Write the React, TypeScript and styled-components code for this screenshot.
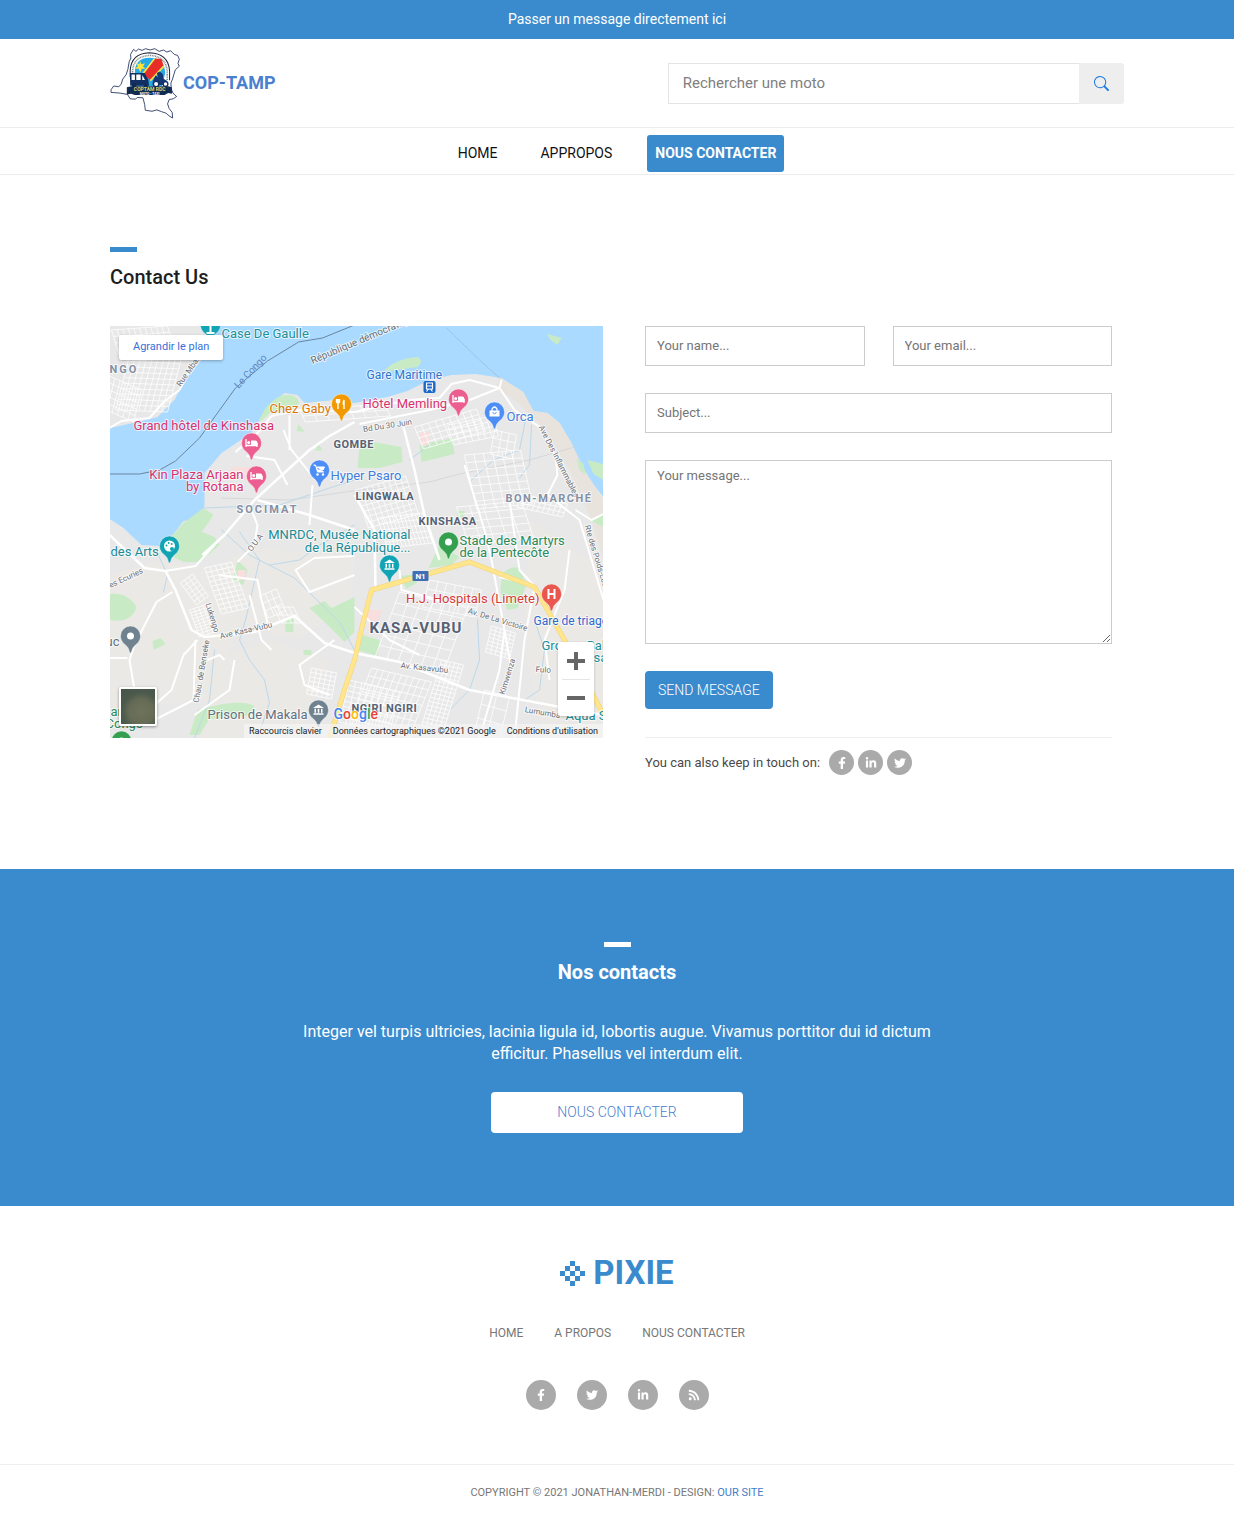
import React from 'react';
import styled, { createGlobalStyle } from 'styled-components';
import { BsSearch } from 'react-icons/bs';
import { FaFacebookF, FaLinkedinIn, FaTwitter, FaRss } from 'react-icons/fa';

const blue = '#3a8bcd';

const GlobalStyle = createGlobalStyle`
  *, *::before, *::after { box-sizing: border-box; }
  body {
    margin: 0;
    background: #fff;
    color: #1e1e1e;
    font-family: Roboto, "Liberation Sans", sans-serif;
    font-size: 14px;
    line-height: 20px;
  }
  a { color: inherit; text-decoration: none; }
  button, input, textarea { font-family: inherit; }
`;

const Container = styled.div`
  width: 100%;
  max-width: 1014px;
  margin: 0 auto;
`;

const HiddenLabel = styled.label`
  position: absolute;
  width: 1px;
  height: 1px;
  overflow: hidden;
  clip-path: inset(50%);
`;

const TopBar = styled.a`
  display: block;
  padding: 9px 0 10px;
  background: ${blue};
  color: #fff;
  text-align: center;
`;

const HeaderRow = styled(Container)`
  display: flex;
  align-items: center;
  justify-content: space-between;
  padding: 8px 0;
`;

const Brand = styled.a`
  display: flex;
  align-items: center;
  gap: 3px;
  color: #4a80cf;
  font-size: 18px;
  font-weight: 700;
`;

const SearchForm = styled.form`
  display: flex;
  width: 45%;
  height: 41px;
`;

const SearchInput = styled.input`
  flex: 1;
  min-width: 0;
  padding: 0 14px;
  border: 1px solid #e4e4e4;
  border-right: 0;
  font-size: 15px;
  color: #444;
  &::placeholder { color: #808080; opacity: 1; }
`;

const SearchButton = styled.button`
  display: grid;
  place-items: center;
  width: 45px;
  border: 0;
  border-radius: 0 3px 3px 0;
  background: #eee;
  color: #1a78e0;
`;

const Nav = styled.nav`
  display: flex;
  justify-content: center;
  align-items: flex-start;
  gap: 27px;
  height: 48px;
  padding: 7px 0;
  border-top: 1px solid #ececec;
  border-bottom: 1px solid #ececec;
`;

const NavLink = styled.a<{ $active?: boolean }>`
  padding: 8px 8px 9px;
  border-radius: 3px;
  background: ${p => (p.$active ? blue : 'transparent')};
  color: ${p => (p.$active ? '#fff' : '#111')};
  font-size: 14px;
  font-weight: ${p => (p.$active ? 700 : 400)};
`;

const ContactSection = styled.section`
  padding: 72px 0 94px;
`;

const Accent = styled.span<{ $light?: boolean }>`
  display: block;
  width: 27px;
  height: 5px;
  background: ${p => (p.$light ? '#fff' : blue)};
`;

const Title = styled.h1`
  margin: 12px 0 36px;
  font-size: 20px;
  line-height: 26px;
  font-weight: 500;
`;

const Columns = styled.div`
  display: grid;
  grid-template-columns: 1fr 1fr;
  align-items: start;
  gap: 28px;
`;

const FormColumn = styled.div`
  padding: 0 12px 0 14px;
`;

const ContactForm = styled.form`
  display: grid;
  grid-template-columns: 1fr 1fr;
  gap: 27px 28px;
  padding-bottom: 28px;
  border-bottom: 1px solid #eee;
`;

const Field = styled.div<{ $wide?: boolean }>`
  display: flex;
  grid-column: ${p => (p.$wide ? '1 / -1' : 'auto')};
`;

const TextInput = styled.input`
  width: 100%;
  height: 40px;
  padding: 0 11px 1px;
  border: 1px solid #ccc;
  font-size: 13px;
  &::placeholder { color: #757575; opacity: 1; }
`;

const MessageInput = styled.textarea`
  width: 100%;
  height: 184px;
  padding: 5px 11px;
  border: 1px solid #ccc;
  font-size: 13px;
  line-height: 20px;
  resize: both;
  &::placeholder { color: #757575; opacity: 1; }
`;

const SendButton = styled.button`
  justify-self: start;
  height: 38px;
  padding: 0 13px;
  border: 0;
  border-radius: 4px;
  background: ${blue};
  color: #fff;
  font-size: 14px;
  font-weight: 300;
`;

const Touch = styled.div`
  display: flex;
  align-items: center;
  gap: 9px;
  padding-top: 12px;
  color: #4a4a4a;
  font-size: 13px;
`;

const Socials = styled.div<{ $gap: number }>`
  display: flex;
  justify-content: center;
  gap: ${p => p.$gap}px;
`;

const SocialLink = styled.a<{ $size: number }>`
  display: grid;
  place-items: center;
  width: ${p => p.$size}px;
  height: ${p => p.$size}px;
  border-radius: 50%;
  background: #aaa;
  color: #fff;
  font-size: 12px;
`;

const CallToAction = styled.section`
  display: flex;
  flex-direction: column;
  align-items: center;
  padding: 73px 20px;
  background: ${blue};
  color: #fff;
  text-align: center;
`;

const CallTitle = styled.h2`
  margin: 12px 0 36px;
  font-size: 20px;
  line-height: 26px;
  font-weight: 700;
`;

const CallText = styled.p`
  max-width: 640px;
  margin: 0 0 27px;
  font-size: 16px;
  line-height: 22px;
`;

const CallButton = styled.a`
  width: 252px;
  padding: 10px 0 11px;
  border-radius: 4px;
  background: #fff;
  color: #4a80cf;
  font-size: 14px;
  font-weight: 300;
`;

const Footer = styled.footer`
  display: flex;
  flex-direction: column;
  align-items: center;
  padding-top: 47px;
`;

const PixieBrand = styled.a`
  display: flex;
  align-items: center;
  gap: 8px;
  color: ${blue};
  font-size: 33px;
  line-height: 40px;
  font-weight: 700;
`;

const FooterLinks = styled.nav`
  display: flex;
  gap: 31px;
  margin: 30px 0 37px;
  color: #777;
  font-size: 12px;
`;

const Copyright = styled.div`
  width: 100%;
  margin-top: 54px;
  padding: 18px 0 17px;
  border-top: 1px solid #eee;
  color: #777;
  font-size: 11px;
  text-align: center;
  a { color: #4380c8; }
`;

/* ---------- map ---------- */

const MapFrame = styled.div`
  position: relative;
  height: 412px;
  overflow: hidden;
  background: #e8e8e8;
`;

const MapCanvas = styled.svg`
  display: block;
  width: 100%;
  height: 100%;
`;

const MapLink = styled.a`
  position: absolute;
  top: 9px;
  left: 9px;
  padding: 2px 14px 3px;
  border-radius: 2px;
  background: #fff;
  box-shadow: 0 1px 3px rgba(0, 0, 0, 0.3);
  color: #3a6fd8;
  font-size: 11px;
`;

const Satellite = styled.button`
  position: absolute;
  left: 9px;
  bottom: 12px;
  width: 38px;
  height: 39px;
  border: 2px solid #fff;
  border-radius: 2px;
  background: radial-gradient(circle at 60% 65%, #6f735c 0%, #666b56 40%, #4c5a4c 62%, #44544a 100%);
  box-shadow: 0 1px 3px rgba(0, 0, 0, 0.4);
`;

const ZoomPanel = styled.div`
  position: absolute;
  right: 9px;
  bottom: 22px;
  padding: 0 4px;
  border-radius: 2px;
  background: #fff;
  box-shadow: 0 1px 3px rgba(0, 0, 0, 0.2);
`;

const ZoomButton = styled.button`
  display: grid;
  place-items: center;
  width: 28px;
  height: 37px;
  padding: 0;
  border: 0;
  background: #fff;
  & + & { border-top: 1px solid #e6e6e6; }
`;

const MapLegal = styled.div`
  position: absolute;
  right: 0;
  bottom: 0;
  display: flex;
  gap: 11px;
  padding: 0 5px;
  background: rgba(245, 245, 245, 0.7);
  color: #222;
  font-size: 9px;
  line-height: 14px;
`;

const Halo = styled.text`
  paint-order: stroke;
  stroke: #fff;
  stroke-width: 2px;
  stroke-linejoin: round;
  stroke-opacity: 0.7;
`;

type Pt = [number, number];

/* Streets filling the parallelogram spanned by two sides from one corner. */
function Streets({ at, u, v, m, n }: { at: Pt; u: Pt; v: Pt; m: number; n: number }) {
  let d = '';
  for (let i = 0; i <= m; i++) {
    const k = i / m;
    d += `M${at[0] + u[0] * k} ${at[1] + u[1] * k}l${v[0]} ${v[1]}`;
  }
  for (let j = 0; j <= n; j++) {
    const k = j / n;
    d += `M${at[0] + v[0] * k} ${at[1] + v[1] * k}l${u[0]} ${u[1]}`;
  }
  return <path d={d} fill="none" stroke="#fff" strokeWidth="1" strokeOpacity=".75" />;
}

function Pin({ x, y, fill, children }: { x: number; y: number; fill: string; children?: React.ReactNode }) {
  return (
    <g transform={`translate(${x} ${y})`}>
      <path d="M0 17C-1.500 17-1 13-3.500 10.500C-6 8-10 5.500-10 0A10 10 0 0 1 10 0C10 5.500 6 8 3.500 10.500C1 13 1.500 17 0 17Z" fill={fill} stroke="#fff" strokeWidth=".6" strokeOpacity=".7" />
      {children || <circle r="3.500" fill="#fff" />}
    </g>
  );
}

const bed = (
  <g>
    <path d="M-5.500-4V4M-5.500 2.500H5.500M5.500 4V0" fill="none" stroke="#fff" strokeWidth="1.300" />
    <circle cx="-2.800" cy="-.5" r="1.500" fill="#fff" />
    <path d="M-.5-2.500H4Q6-2.500 6 0V2.500H-.5Z" fill="#fff" />
  </g>
);
const museum = <path d="M-5.500-2L0-5.500L5.500-2ZM-4-1.200h1.500v4H-4ZM-.8-1.200H.8v4H-.8ZM2.500-1.200H4v4H2.500ZM-5 3.300H5V4.800H-5Z" fill="#fff" />;

type Label = { x: number; y: number; t: string; c: string; a?: 'start' | 'middle' | 'end'; s?: number; b?: boolean; ls?: number };

const labels: Label[] = [
  { x: 222, y: 338, t: 'Case De Gaulle', c: '#22909c' },
  { x: 367, y: 379, t: 'Gare Maritime', c: '#2f74c8', s: 12 },
  { x: 363, y: 408, t: 'Hôtel Memling', c: '#d8326e' },
  { x: 270, y: 413, t: 'Chez Gaby', c: '#d87808' },
  { x: 134, y: 430, t: 'Grand hôtel de Kinshasa', c: '#d8326e' },
  { x: 244, y: 479, t: 'Kin Plaza Arjaan', c: '#d8326e', a: 'end' },
  { x: 244, y: 491, t: 'by Rotana', c: '#d8326e', a: 'end' },
  { x: 507, y: 421, t: 'Orca', c: '#3f7de0' },
  { x: 331, y: 480, t: 'Hyper Psaro', c: '#3f7de0' },
  { x: 411, y: 539, t: 'MNRDC, Musée National', c: '#1a8b96', a: 'end' },
  { x: 411, y: 552, t: 'de la République...', c: '#1a8b96', a: 'end' },
  { x: 460, y: 545, t: 'Stade des Martyrs', c: '#2b8a58' },
  { x: 460, y: 557, t: 'de la Pentecôte', c: '#2b8a58' },
  { x: 540, y: 603, t: 'H.J. Hospitals (Limete)', c: '#d53c39', a: 'end' },
  { x: 534, y: 625, t: 'Gare de triage', c: '#2f68ce', s: 12 },
  { x: 542, y: 650, t: 'Groupe Bal', c: '#22909c' },
  { x: 594, y: 662, t: 'sa', c: '#22909c' },
  { x: 566, y: 720, t: 'Aqua S', c: '#1a8b96' },
  { x: 111, y: 556, t: 'des Arts', c: '#1a8b96' },
  { x: 106, y: 646, t: 'uc', c: '#607080' },
  { x: 208, y: 719, t: 'Prison de Makala', c: '#607080' },
  { x: 111, y: 716, t: 'ar', c: '#2b8a58' },
  { x: 106, y: 728, t: 'Congo', c: '#2b8a58' },
  { x: 110, y: 373, t: 'NGO', c: '#8590a4', s: 11, b: true, ls: 2 },
  { x: 334, y: 448, t: 'GOMBE', c: '#566173', s: 11, b: true, ls: 0.5 },
  { x: 356, y: 500, t: 'LINGWALA', c: '#566173', s: 11, b: true, ls: 0.5 },
  { x: 237, y: 513, t: 'SOCIMAT', c: '#8590a4', s: 11, b: true, ls: 2 },
  { x: 506, y: 502, t: 'BON-MARCHÉ', c: '#8590a4', s: 11, b: true, ls: 1.5 },
  { x: 419, y: 525, t: 'KINSHASA', c: '#566173', s: 11, b: true, ls: 0.5 },
  { x: 370, y: 633, t: 'KASA-VUBU', c: '#566173', s: 15, b: true, ls: 1 },
  { x: 352, y: 712, t: 'NGIRI NGIRI', c: '#566173', s: 11, b: true, ls: 0.5 },
];

const streetNames: { x: number; y: number; r: number; t: string; c?: string; s?: number }[] = [
  { x: 181, y: 387, r: -55, t: 'Rue Mbam' },
  { x: 239, y: 389, r: -47, t: 'Le Congo', c: '#5f86c0', s: 10 },
  { x: 313, y: 364, r: -23, t: 'République démocratique', s: 10 },
  { x: 364, y: 432, r: -9, t: 'Bd Du 30 Juin' },
  { x: 539, y: 427, r: 63, t: 'Ave Des Inflammables' },
  { x: 585, y: 526, r: 73, t: 'Rte des Poids-Lourds' },
  { x: 252, y: 552, r: -53, t: 'O.U.A' },
  { x: 111, y: 588, r: -25, t: 'es Ecuries' },
  { x: 206, y: 604, r: 73, t: 'Lukengo' },
  { x: 221, y: 639, r: -13, t: 'Ave Kasa-Vubu' },
  { x: 199, y: 703, r: -80, t: 'Chau. de Benseke' },
  { x: 468, y: 613, r: 17, t: 'Av. De La Victoire' },
  { x: 401, y: 668, r: 6, t: 'Av. Kasavubu' },
  { x: 505, y: 695, r: -73, t: 'Kimwenza' },
  { x: 536, y: 672, r: 3, t: 'Fulo' },
  { x: 525, y: 712, r: 10, t: 'Lumumba' },
];

function CityMap() {
  return (
    <MapCanvas viewBox="110 326 494 412" preserveAspectRatio="xMidYMid slice" role="img" aria-label="Carte de Kinshasa">
      <rect x="110" y="326" width="494" height="412" fill="#e8e8e8" />
      {/* hilly ground and suburbs */}
      <path d="M110 575L160 560L215 568L250 548L355 556L352 600L300 640L240 625L210 700L110 710ZM530 520L604 570V738H545L525 650ZM270 640L330 660L300 738H200L215 660Z" fill="#ebe8e5" opacity=".8" />
      {/* river */}
      <path d="M217 326H604V497L590 480L578 463L572 443L560 423L548 413L534 411L522 397L502 378L476 374L452 375L430 380L408 391L388 397L355 403L335 400L305 403L298 395L285 393L268 407L260 420L252 433L222 453L205 473L205 505L202 518L184 521L174 534L160 546L142 545L124 528L110 519V428L138 422L158 417L175 400L185 380L202 360L212 345Z" fill="#aadaff" />
      <path d="M502 378L524 392L534 411L548 413L560 423L572 443L585 470L604 500V560L592 520L570 470L545 428L515 400L495 388Z" fill="#e9e3dd" />
      <path d="M578 458Q588 460 591 478L600 487V472L587 456Z" fill="#aadaff" />
      {/* parks and islands */}
      <g fill="#c8ebc5">
        <path d="M385 370Q398 358 418 357Q425 361 418 367L390 371ZM548 334L562 338L558 345L550 339ZM577 458L584 464L586 475L580 470ZM588 460L604 464V480L594 474Z" />
        <path d="M266 408Q282 389 296 397Q306 406 288 409L272 411Q258 426 260 419ZM204 508L214 515L203 531L178 534L184 523ZM183 524L215 537L220 545L200 562L184 562L160 550Z" />
        <path d="M360 448L374 442L402 447L403 462L380 468L358 468ZM420 445L453 438L455 454L422 462ZM238 560L248 570L244 585L234 580ZM310 608L325 601L332 608L355 597V632L345 642L325 622ZM110 594Q128 592 137 607Q132 624 110 620ZM429 568L440 545L460 557L452 565ZM400 576L420 574L417 583L407 589ZM502 575Q510 565 520 568L527 585L518 608L508 610L501 592ZM360 634L380 640L378 656L358 650ZM198 710Q240 698 255 706L248 716L210 719L200 735H190ZM153 641L161 638L166 644L154 650ZM285 618H294V632H286ZM304 650H312V655H304ZM590 520L604 514V527ZM458 511H465V517H458ZM299 424L305 432L297 431ZM319 444L323 450L316 451Z" />
      </g>
      <path d="M420 433L430 432L430 444L422 447ZM238 570H246V580H238ZM368 610H382L380 621H366ZM232 467H250V480H228Z" fill="#f8dedd" />
      {/* rail lines and streams */}
      <g fill="none" strokeLinecap="round">
        <path d="M110 474H140L160 470L176 461L200 438L236 388L268 361L299 342L323 338L355 325" stroke="#6b85a0" strokeWidth="1" />
        <path d="M447 328L480 360L500 378" stroke="#9bbcd8" strokeWidth=".8" strokeDasharray="4 1" />
        <path d="M222 498L290 500L360 490L430 482L460 474L530 460L575 447" stroke="#cfd3d7" strokeWidth=".8" />
        <path d="M205 508L280 505L330 488L355 480M222 530L250 555L295 578L340 622L355 650M158 553L168 575L164 592M240 532L260 560L246 620L240 640L250 660L265 680L270 703L258 738M355 525L320 545L300 560L270 565M526 420L520 450L494 460L470 482M532 425L530 465L520 478M430 445L410 460M478 620L480 660L470 690L450 710M535 620L545 650L540 690L525 700M215 650L210 700L195 738" stroke="#bcd8ea" strokeWidth="1" />
      </g>
      {/* dense street grids */}
      <Streets at={[112, 330]} u={[56, -4]} v={[10, 32]} m={10} n={5} />
      <Streets at={[130, 356]} u={[52, 2]} v={[-14, 54]} m={9} n={10} />
      <Streets at={[110, 376]} u={[32, 14]} v={[-8, 32]} m={6} n={5} />
      <Streets at={[300, 410]} u={[85, -6]} v={[6, 12]} m={7} n={2} />
      <Streets at={[415, 427]} u={[62, -18]} v={[9, 22]} m={9} n={4} />
      <Streets at={[448, 425]} u={[45, -9]} v={[6, 20]} m={7} n={4} />
      <Streets at={[465, 455]} u={[56, -5]} v={[12, 54]} m={6} n={7} />
      <Streets at={[495, 430]} u={[22, 5]} v={[-4, 24]} m={3} n={3} />
      <Streets at={[356, 490]} u={[50, -14]} v={[13, 38]} m={9} n={7} />
      <Streets at={[378, 518]} u={[45, -5]} v={[10, 30]} m={12} n={5} />
      <Streets at={[457, 507]} u={[65, -6]} v={[12, 37]} m={5} n={5} />
      <Streets at={[522, 494]} u={[46, 10]} v={[-5, 13]} m={9} n={3} />
      <Streets at={[205, 568]} u={[27, -6]} v={[17, 46]} m={5} n={10} />
      <Streets at={[181, 583]} u={[12, -9]} v={[16, 22]} m={3} n={6} />
      <Streets at={[190, 610]} u={[18, -6]} v={[10, 27]} m={4} n={9} />
      <Streets at={[260, 596]} u={[17, -7]} v={[9, 22]} m={3} n={3} />
      <Streets at={[274, 607]} u={[20, 0]} v={[8, 16]} m={4} n={2} />
      <Streets at={[312, 668]} u={[25, 5]} v={[-5, 26]} m={5} n={6} />
      <Streets at={[400, 592]} u={[68, 16]} v={[-24, 64]} m={6} n={6} />
      <Streets at={[430, 580]} u={[52, 10]} v={[-7, 27]} m={6} n={3} />
      <Streets at={[372, 668]} u={[60, 14]} v={[-22, 55]} m={10} n={7} />
      <Streets at={[442, 660]} u={[22, 5]} v={[-20, 66]} m={5} n={16} />
      <Streets at={[350, 680]} u={[50, 12]} v={[-10, 42]} m={8} n={8} />
      <Streets at={[492, 626]} u={[24, 7]} v={[-6, 26]} m={5} n={7} />
      <Streets at={[485, 690]} u={[25, 7]} v={[-10, 42]} m={2} n={3} />
      {/* main roads */}
      <g fill="none" stroke="#fff" strokeWidth="2" strokeLinejoin="round">
        <path d="M110 428L122 421L150 418L164 402L180 390L193 365L220 337" />
        <path d="M236 452L259 432L272 416L300 410L355 412L410 400L440 398L452 384L470 380L500 388L502 380M360 424L430 410L470 400L500 388L515 410L540 427L556 456L558 475L548 495L580 520L604 600" />
        <path d="M203 555L225 535L255 500L310 450L330 436L355 422M404 427L415 470L425 515L440 560M355 495L375 530L376 590M258 500L310 515L355 530M110 535L145 568L166 571L176 590L192 630L205 637L255 632L295 616L325 643L355 653L400 662L470 690L604 715" strokeWidth="2.500" />
        <path d="M166 571L196 566L215 545L203 555M173 592L157 602L135 645L130 660L135 690M110 658H128M198 640L184 655L172 690L155 705M196 640L194 700L155 720L135 715M238 562L255 545L258 525L250 505M220 575L258 580L262 600L270 630M465 465L485 530L492 560L505 630L512 670M576 510L592 520L604 514M500 577L534 585L520 570L510 500M355 607L390 640L420 655M247 456L275 460L288 485M284 430L292 450L316 480M290 415L290 450M313 485L310 525M355 556L315 558L296 570L310 592L355 575M505 630L500 670L480 738M535 587L525 640L515 738M570 550L565 590L545 640L550 680M250 595L262 640L272 650M335 640L300 665L305 685L330 695M235 660L230 690L195 715M225 660L220 655L208 660M400 570L402 590L440 600" />
      </g>
      <path d="M330 738L345 690L355 660L363 625L372 590L470 562L535 587L565 640L604 715" fill="none" stroke="#f1d27c" strokeWidth="5" strokeLinejoin="round" />
      <path d="M330 738L345 690L355 660L363 625L372 590L470 562L535 587L565 640L604 715" fill="none" stroke="#ffe58b" strokeWidth="4" strokeLinejoin="round" />
      <rect x="413" y="571" width="16" height="10" rx="1" fill="#3f6fb5" />
      <text x="421" y="579" fill="#fff" fontSize="8" fontWeight="700" textAnchor="middle">N1</text>
      {streetNames.map(s => (
        <Halo key={s.t} transform={`translate(${s.x} ${s.y}) rotate(${s.r})`} fontSize={s.s || 8} fill={s.c || '#6b7076'} style={s.c ? { stroke: 'none' } : undefined}>{s.t}</Halo>
      ))}
      {labels.map(l => (
        <Halo key={l.t} x={l.x} y={l.y} fill={l.c} fontSize={l.s || 13} fontWeight={l.b ? 700 : 400} letterSpacing={l.ls} textAnchor={l.a}>{l.t}</Halo>
      ))}
      <Pin x={211} y={325} fill="#12a4b4"><path d="M0-3V8M-4 8H4" stroke="#fff" strokeWidth="2" /></Pin>
      <Pin x={342} y={404} fill="#f29900"><path d="M-3.500 5V-5M-5-5V-2Q-3.500 0-2-2V-5M2.500 5V-4Q1 0 2.500 1" fill="none" stroke="#fff" strokeWidth="1.400" /></Pin>
      <Pin x={459} y={399} fill="#eb5e8f">{bed}</Pin>
      <Pin x={252} y={443} fill="#eb5e8f">{bed}</Pin>
      <Pin x={257} y={476} fill="#eb5e8f">{bed}</Pin>
      <Pin x={495} y={412} fill="#4c8df6"><path d="M-5-1.500H5V4.500H-5Z" fill="#fff" /><path d="M-2.500-1V-3Q0-7 2.500-3V-1" fill="none" stroke="#fff" strokeWidth="1.300" /><path d="M-2 .5Q0 3 2 .5" fill="none" stroke="#4c8df6" /></Pin>
      <Pin x={320} y={470} fill="#4c8df6"><path d="M-6-5H-4L-2 2H4.500M-3-3H5L3.500 0H-2Z" fill="#fff" stroke="#fff" /><circle cx="-2" cy="4.500" r="1.200" fill="#fff" /><circle cx="3.500" cy="4.500" r="1.200" fill="#fff" /></Pin>
      <Pin x={390} y={565} fill="#12a4b4">{museum}</Pin>
      <Pin x={170} y={546} fill="#12a4b4"><circle r="5.500" fill="#fff" /><g fill="#12a4b4"><circle cx="-3" cy="-.5" r="1" /><circle cx="-.8" cy="-3" r="1" /><circle cx="2.200" cy="-2" r="1" /><circle cx="2.500" cy="3" r="2" /></g></Pin>
      <Pin x={449} y={542} fill="#34a04f" />
      <Pin x={552} y={594} fill="#e9574f"><path d="M-3-5V5M3-5V5M-3 0H3" stroke="#fff" strokeWidth="2" /></Pin>
      <Pin x={131} y={636} fill="#6f8290" />
      <Pin x={319} y={710} fill="#6f8290">{museum}</Pin>
      <Pin x={122} y={741} fill="#34a04f" />
      <rect x="424" y="381" width="12" height="12" rx="2" fill="#1967c8" />
      <path d="M427 383H433V389H427ZM427 391.500L429 389M433 391.500L431 389M427 386H433" fill="none" stroke="#fff" strokeWidth="1.200" />
      <Halo x="334" y="719" fontSize="14" fontWeight="500">
        <tspan fill="#4285f4">G</tspan><tspan fill="#ea4335">o</tspan><tspan fill="#fbbc05">o</tspan><tspan fill="#4285f4">g</tspan><tspan fill="#34a853">l</tspan><tspan fill="#ea4335">e</tspan>
      </Halo>
    </MapCanvas>
  );
}

function CongoLogo() {
  return (
    <svg width="70" height="72" viewBox="31 21 208 214" aria-hidden="true">
      <path d="M101 28L108 34L116 27L126 31L137 26L150 30L164 26L177 34L190 30L200 36L211 32L222 43L232 46L237 57L233 70L237 78L225 89L221 102L217 116L212 128L213 145L218 158L229 168L219 175L207 177L202 190L207 204L216 216L217 232L207 226L198 218L184 213L170 208L156 212L136 209L134 192L129 172L112 171L107 176L91 175L83 162L61 158L34 156L34 148L42 137L57 139L64 132L69 116L79 103L84 88L88 65L93 54L92 43Z" fill="#fff" stroke="#1c2d5c" strokeWidth="2.500" strokeLinejoin="round" />
      <path d="M91 110V92Q93 40 148 38Q205 40 208 92V120" fill="#fff" stroke="#1b2338" strokeWidth="3" />
      <path d="M98 110V94Q100 49 148 46Q198 48 201 94V120" fill="none" stroke="#8b8e90" strokeWidth="5" strokeDasharray="3 2" />
      <path d="M105 100Q103 54 148 53Q194 54 195 100L185 137H112Z" fill="#25aae8" />
      <path d="M129 103L165 55L184 57L190 76L151 119Z" fill="#e82c28" />
      <path d="M127 103L163 56M151 121L191 78" stroke="#f6df4a" strokeWidth="5" />
      <path d="M120 62L124 72L135 69L129 79L137 86L125 86L121 96L116 86L105 85L114 78L109 68L118 72Z" fill="#ffe338" />
      <path d="M90 98H134L145 119L147 136H91Z" fill="#123064" />
      <path d="M95 103H105V119H95ZM109 103H122V119H109ZM127 104L135 119H127Z" fill="#fff" />
      <path d="M158 123L166 106L174 111L170 98L179 94L188 101L190 115L201 122V134H158Z" fill="#143776" />
      <circle cx="103" cy="136" r="7" fill="#122b50" /><circle cx="137" cy="136" r="6" fill="#122b50" /><circle cx="168" cy="131" r="8" fill="#fff" stroke="#123064" strokeWidth="4" /><circle cx="196" cy="131" r="7" fill="#fff" stroke="#123064" strokeWidth="4" />
      <path d="M81 141L94 138H204L215 141V160L204 158L193 164H105L94 160L81 162Z" fill="#122b50" />
      <text x="149" y="152" fontSize="15" fontWeight="700" textAnchor="middle" fill="#d4d978">COPTAM RDC</text>
      <text x="149" y="163" fontSize="10" fontWeight="700" textAnchor="middle" fill="#fff">MOTO - TAXI</text>
    </svg>
  );
}

function PixieMark() {
  const cells: Pt[] = [[2, 0], [1, 1], [3, 1], [0, 2], [2, 2], [4, 2], [1, 3], [3, 3], [2, 4]];
  return (
    <svg width="25" height="25" viewBox="0 0 5 5" fill="currentColor" aria-hidden="true">
      {cells.map(([x, y]) => <rect key={`${x}${y}`} x={x} y={y} width="1" height="1" />)}
    </svg>
  );
}

export default function App() {
  return (
    <>
      <GlobalStyle />
      <TopBar href="#contact">Passer un message directement ici</TopBar>
      <header>
        <HeaderRow>
          <Brand href="#"><CongoLogo />COP-TAMP</Brand>
          <SearchForm role="search" onSubmit={e => e.preventDefault()}>
            <HiddenLabel htmlFor="search">Rechercher une moto</HiddenLabel>
            <SearchInput id="search" placeholder="Rechercher une moto" />
            <SearchButton aria-label="Rechercher"><BsSearch size={15} /></SearchButton>
          </SearchForm>
        </HeaderRow>
        <Nav>
          <NavLink href="#">HOME</NavLink>
          <NavLink href="#">APPROPOS</NavLink>
          <NavLink href="#contact" $active>NOUS CONTACTER</NavLink>
        </Nav>
      </header>

      <ContactSection id="contact">
        <Container>
          <Accent />
          <Title>Contact Us</Title>
          <Columns>
            <MapFrame>
              <CityMap />
              <MapLink href="#">Agrandir le plan</MapLink>
              <Satellite aria-label="Vue satellite" />
              <ZoomPanel>
                <ZoomButton aria-label="Zoom avant">
                  <svg width="18" height="18" viewBox="0 0 18 18"><path d="M9 0V18M0 9H18" stroke="#666" strokeWidth="4" /></svg>
                </ZoomButton>
                <ZoomButton aria-label="Zoom arrière">
                  <svg width="18" height="18" viewBox="0 0 18 18"><path d="M0 9H18" stroke="#666" strokeWidth="4" /></svg>
                </ZoomButton>
              </ZoomPanel>
              <MapLegal>
                <a href="#">Raccourcis clavier</a>
                <span>Données cartographiques ©2021 Google</span>
                <a href="#">Conditions d'utilisation</a>
              </MapLegal>
            </MapFrame>
            <FormColumn>
              <ContactForm onSubmit={e => e.preventDefault()}>
                <Field>
                  <HiddenLabel htmlFor="name">Your name</HiddenLabel>
                  <TextInput id="name" placeholder="Your name..." />
                </Field>
                <Field>
                  <HiddenLabel htmlFor="email">Your email</HiddenLabel>
                  <TextInput id="email" type="email" placeholder="Your email..." />
                </Field>
                <Field $wide>
                  <HiddenLabel htmlFor="subject">Subject</HiddenLabel>
                  <TextInput id="subject" placeholder="Subject..." />
                </Field>
                <Field $wide>
                  <HiddenLabel htmlFor="message">Your message</HiddenLabel>
                  <MessageInput id="message" placeholder="Your message..." />
                </Field>
                <SendButton type="submit">SEND MESSAGE</SendButton>
              </ContactForm>
              <Touch>
                You can also keep in touch on:
                <Socials $gap={4}>
                  <SocialLink $size={25} href="#" aria-label="Facebook"><FaFacebookF /></SocialLink>
                  <SocialLink $size={25} href="#" aria-label="LinkedIn"><FaLinkedinIn /></SocialLink>
                  <SocialLink $size={25} href="#" aria-label="Twitter"><FaTwitter /></SocialLink>
                </Socials>
              </Touch>
            </FormColumn>
          </Columns>
        </Container>
      </ContactSection>

      <CallToAction>
        <Accent $light />
        <CallTitle>Nos contacts</CallTitle>
        <CallText>Integer vel turpis ultricies, lacinia ligula id, lobortis augue. Vivamus porttitor dui id dictum efficitur. Phasellus vel interdum elit.</CallText>
        <CallButton href="#contact">NOUS CONTACTER</CallButton>
      </CallToAction>

      <Footer>
        <PixieBrand href="#"><PixieMark />PIXIE</PixieBrand>
        <FooterLinks>
          <a href="#">HOME</a>
          <a href="#">A PROPOS</a>
          <a href="#contact">NOUS CONTACTER</a>
        </FooterLinks>
        <Socials $gap={21}>
          <SocialLink $size={30} href="#" aria-label="Facebook"><FaFacebookF /></SocialLink>
          <SocialLink $size={30} href="#" aria-label="Twitter"><FaTwitter /></SocialLink>
          <SocialLink $size={30} href="#" aria-label="LinkedIn"><FaLinkedinIn /></SocialLink>
          <SocialLink $size={30} href="#" aria-label="RSS"><FaRss /></SocialLink>
        </Socials>
        <Copyright>COPYRIGHT © 2021 JONATHAN-MERDI - DESIGN: <a href="#">OUR SITE</a></Copyright>
      </Footer>
    </>
  );
}
